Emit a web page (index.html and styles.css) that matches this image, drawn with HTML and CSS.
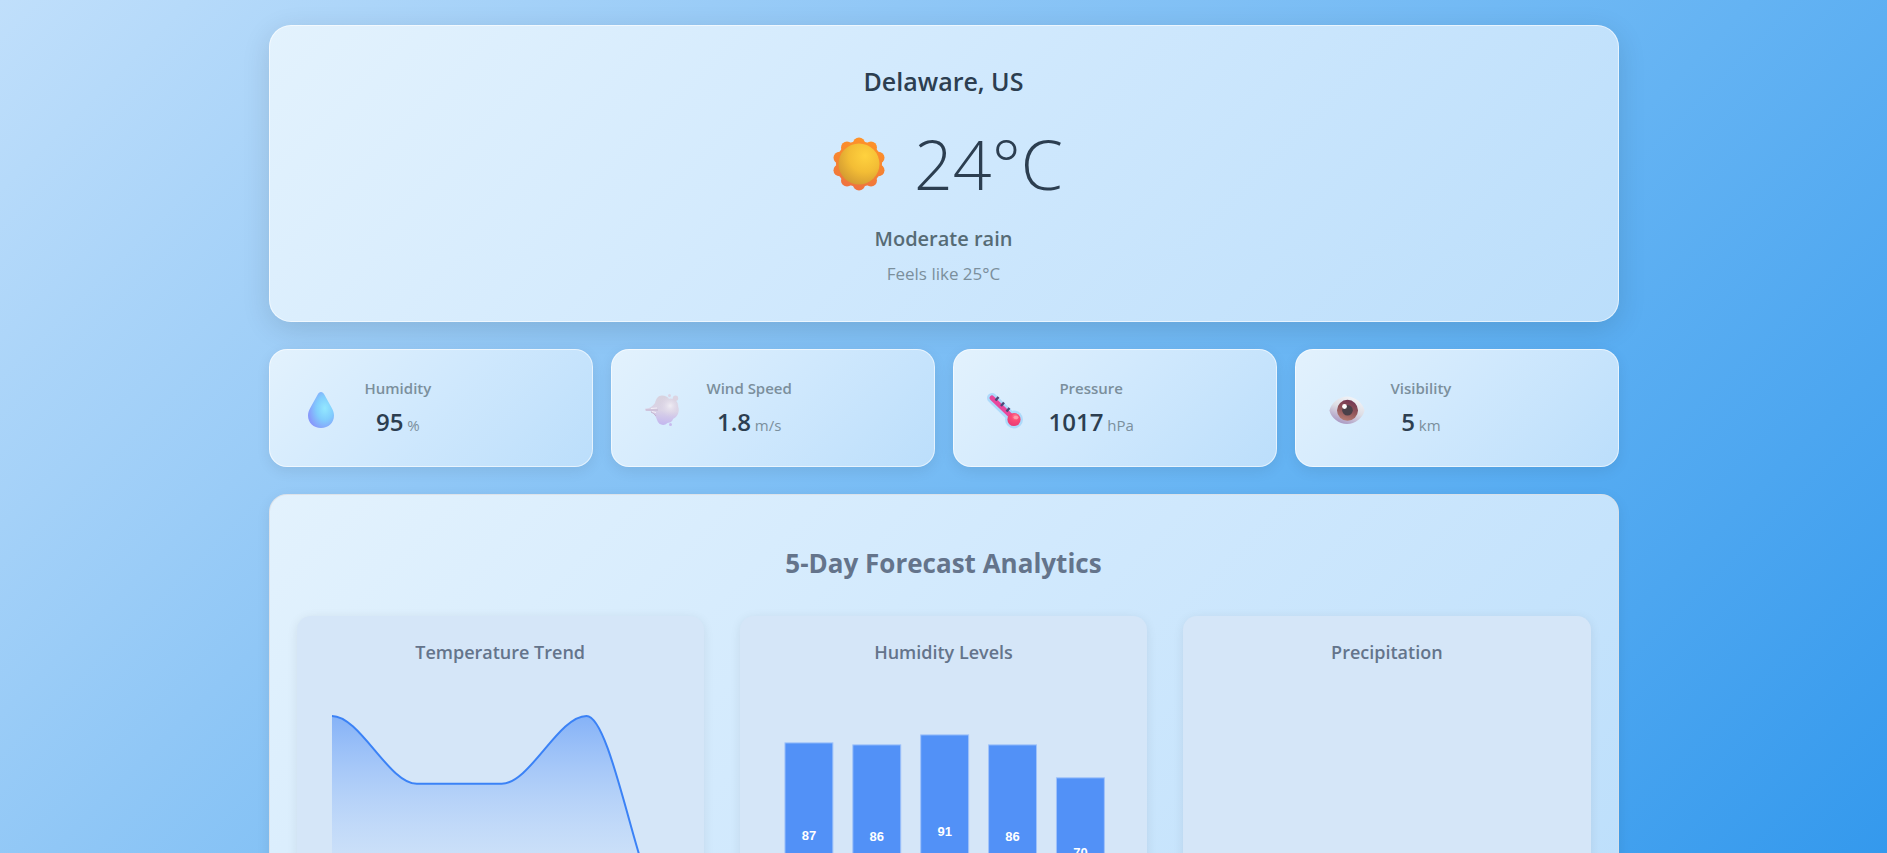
FILE: index.html
```html
<!DOCTYPE html>
<html lang="en">
<head>
<meta charset="utf-8">
<title>Weather Dashboard</title>
<meta name="viewport" content="width=device-width, initial-scale=1">
<link rel="stylesheet" href="styles.css">
</head>
<body>
<main class="dashboard">
  <section class="hero panel">
    <h1 class="hero-city">Delaware, US</h1>
    <div class="hero-now">
      <svg class="hero-icon" viewBox="0 0 70 70" aria-hidden="true">
        <defs>
          <radialGradient id="sunFace" cx="0.65" cy="0.3" r="0.8">
            <stop offset="0" stop-color="#ffd23e"/><stop offset="0.5" stop-color="#f3bd35"/><stop offset="1" stop-color="#cf9631"/>
          </radialGradient>
          <linearGradient id="sunRay" gradientUnits="userSpaceOnUse" x1="42" y1="8" x2="28" y2="62">
            <stop offset="0" stop-color="#ff9429"/><stop offset="0.5" stop-color="#f68431"/><stop offset="1" stop-color="#ee7040"/>
          </linearGradient>
        </defs>
        <g fill="url(#sunRay)">
          <circle cx="35" cy="35" r="23"/>
          <circle cx="35" cy="14.500" r="6"/>
          <circle cx="47" cy="18.400" r="6"/>
          <circle cx="54.500" cy="28.700" r="6"/>
          <circle cx="54.500" cy="41.300" r="6"/>
          <circle cx="47" cy="51.600" r="6"/>
          <circle cx="35" cy="55.500" r="6"/>
          <circle cx="23" cy="51.600" r="6"/>
          <circle cx="15.500" cy="41.300" r="6"/>
          <circle cx="15.500" cy="28.700" r="6"/>
          <circle cx="23" cy="18.400" r="6"/>
        </g>
        <circle cx="35" cy="35" r="20.500" fill="url(#sunFace)"/>
      </svg>
      <span class="hero-temp">24°C</span>
    </div>
    <p class="hero-condition">Moderate rain</p>
    <p class="hero-feels">Feels like 25°C</p>
  </section>

  <section class="stats">
    <article class="stat panel">
      <svg class="stat-icon" viewBox="0 -2 48 48" aria-hidden="true">
        <defs>
          <radialGradient id="dropFill" cx="0.65" cy="0.45" r="0.65">
            <stop offset="0" stop-color="#93e8ff"/><stop offset="0.5" stop-color="#81cdfd"/><stop offset="1" stop-color="#8799fb"/>
          </radialGradient>
        </defs>
        <path fill="url(#dropFill)" d="M24 6 C25.500 6 26.500 7 27.300 8.600 L34.500 21.500 C36.300 24.600 37 27 37 29.500 C37 37 31.500 42 24 42 C16.500 42 11 37 11 29.500 C11 27 11.700 24.600 13.500 21.500 L20.700 8.600 C21.500 7 22.500 6 24 6Z"/>
      </svg>
      <div class="stat-text">
        <h2 class="stat-label">Humidity</h2>
        <p class="stat-value">95<span class="stat-unit"> %</span></p>
      </div>
    </article>
    <article class="stat panel">
      <svg class="stat-icon" viewBox="0 -2 48 48" aria-hidden="true">
        <defs>
          <linearGradient id="puffFill" x1="0.5" y1="0" x2="0.4" y2="1">
            <stop offset="0" stop-color="#d8d2de"/><stop offset="0.5" stop-color="#dad3e6"/><stop offset="1" stop-color="#c2b5ef"/>
          </linearGradient>
          <radialGradient id="puffLight" cx="0.6" cy="0.4" r="0.5">
            <stop offset="0" stop-color="#f0edf4"/><stop offset="1" stop-color="#dcd4e7" stop-opacity="0"/>
          </radialGradient>
        </defs>
        <path fill="url(#puffFill)" d="M6 22.800 C11 22.500 13.500 20.500 16 17 C17 13 19 9.500 23 9.500 C26.500 9.500 28.500 11 30 13 C35 11.500 39.500 15.500 39 20.500 C41 26 38.500 31 34 33 C33 36.500 30 36.500 28.500 37 C25 40.500 19.500 39 18 34 C17 30 14 26 11 25 L6 24.500Z"/>
        <circle cx="29" cy="22" r="11" fill="url(#puffLight)"/>
        <path d="M7 24 L19 24 M12 26 Q15 27 17 30" stroke="#c4b2cd" stroke-width="1" fill="none"/>
        <path d="M12 22.500 L18 22 M13 25.500 L17 26.500" stroke="#f3eef7" stroke-width="1"/>
        <circle cx="36.500" cy="12.300" r="2.700" fill="#dcd4e2"/><circle cx="30.500" cy="9.500" r="1.500" fill="#dcd4e5"/><circle cx="31.500" cy="38.500" r="1.500" fill="#c7bbef"/>
      </svg>
      <div class="stat-text">
        <h2 class="stat-label">Wind Speed</h2>
        <p class="stat-value">1.8<span class="stat-unit"> m/s</span></p>
      </div>
    </article>
    <article class="stat panel">
      <svg class="stat-icon" viewBox="0 -2 48 48" aria-hidden="true">
        <defs>
          <radialGradient id="bulb" cx="0.6" cy="0.3" r="0.7">
            <stop offset="0" stop-color="#ff8c9c"/><stop offset="0.4" stop-color="#fb4c76"/><stop offset="1" stop-color="#e93c76"/>
          </radialGradient>
        </defs>
        <path d="M11 12 L33 33.500" stroke="#addafb" stroke-width="10" stroke-linecap="round"/>
        <circle cx="33" cy="33.500" r="9" fill="#addafb"/>
        <path d="M11 12 L31 31" stroke="#e8479c" stroke-width="5" stroke-linecap="round"/>
        <circle cx="33" cy="33.500" r="6.600" fill="url(#bulb)"/>
        <path d="M14.500 14.500 L17.500 11 M20 20 L23 16.500 M25.500 25.500 L28.500 22" stroke="#4d4a78" stroke-width="2.400"/>
        <ellipse cx="35" cy="31.500" rx="2.500" ry="1.800" fill="#ffa5ae" opacity="0.8"/>
      </svg>
      <div class="stat-text">
        <h2 class="stat-label">Pressure</h2>
        <p class="stat-value">1017<span class="stat-unit"> hPa</span></p>
      </div>
    </article>
    <article class="stat panel">
      <svg class="stat-icon" viewBox="0 -2 48 48" aria-hidden="true">
        <defs>
          <linearGradient id="eyeWhite" x1="0.8" y1="0" x2="0.3" y2="1">
            <stop offset="0" stop-color="#f5f7fa"/><stop offset="0.5" stop-color="#dddde4"/><stop offset="1" stop-color="#a794c0"/>
          </linearGradient>
          <linearGradient id="iris" x1="0.7" y1="0" x2="0.4" y2="1">
            <stop offset="0" stop-color="#713653"/><stop offset="0.5" stop-color="#8f5358"/><stop offset="1" stop-color="#b57c72"/>
          </linearGradient>
        </defs>
        <path fill="url(#eyeWhite)" d="M6.500 24.500 C8 17 16 10.500 24 10.500 C32 10.500 40 17 41.500 24.500 C40 32 32 38 24 38 C16 38 8 32 6.500 24.500Z"/>
        <circle cx="24.500" cy="24.300" r="10.500" fill="url(#iris)"/>
        <circle cx="24.500" cy="24.300" r="5.300" fill="#4a4149"/>
        <circle cx="21.500" cy="20.500" r="2.400" fill="#fff"/>
      </svg>
      <div class="stat-text">
        <h2 class="stat-label">Visibility</h2>
        <p class="stat-value">5<span class="stat-unit"> km</span></p>
      </div>
    </article>
  </section>

  <section class="analytics panel">
    <h2 class="analytics-title">5-Day Forecast Analytics</h2>
    <div class="charts">
      <article class="chart">
        <h3 class="chart-title">Temperature Trend</h3>
        <svg class="chart-plot" viewBox="0 0 372 260" role="img" aria-label="Temperature over five days">
          <defs>
            <linearGradient id="area" gradientUnits="userSpaceOnUse" x1="0" y1="36" x2="0" y2="242">
              <stop offset="0" stop-color="#3b82f6" stop-opacity="0.52"/><stop offset="0.8" stop-color="#bfd9fc" stop-opacity="0.2"/>
            </linearGradient>
          </defs>
          <path fill="url(#area)" d="M17 36 C45 36 74 104 102 104 H187 C215 104 244 36 272 36 C300 36 329 242 357 242 H17Z"/>
          <path class="trend-line" d="M17 36 C45 36 74 104 102 104 H187 C215 104 244 36 272 36 C300 36 329 242 357 242"/>
        </svg>
      </article>
      <article class="chart">
        <h3 class="chart-title">Humidity Levels</h3>
        <svg class="chart-plot" viewBox="0 0 372 260" role="img" aria-label="Humidity over five days">
          <g class="bars">
            <rect x="27" y="63" width="48" height="179"/>
            <rect x="95" y="65" width="48" height="177"/>
            <rect x="163" y="55" width="48" height="187"/>
            <rect x="231" y="65" width="48" height="177"/>
            <rect x="299" y="98" width="48" height="144"/>
          </g>
          <g class="bar-labels">
            <text x="51" y="160">87</text>
            <text x="119" y="161">86</text>
            <text x="187" y="156">91</text>
            <text x="255" y="161">86</text>
            <text x="323" y="177">70</text>
          </g>
        </svg>
      </article>
      <article class="chart">
        <h3 class="chart-title">Precipitation</h3>
        <svg class="chart-plot" viewBox="0 0 372 260" role="img" aria-label="No precipitation"></svg>
      </article>
    </div>
  </section>
</main>
</body>
</html>
```

FILE: styles.css
```css
* {
  box-sizing: border-box;
}

body {
  margin: 0;
  height: 100vh;
  overflow-x: hidden;
  overflow-y: auto;
  scrollbar-width: none;
  font-family: "Segoe UI", "Open Sans", "Noto Sans", sans-serif;
  color: #2c3e50;
  background: linear-gradient(135deg, #c0dffb 0%, #90c7f6 33%, #64b3f3 64%, #3499ed 100%) fixed;
}

h1, h2, h3, p {
  margin: 0;
}

.dashboard {
  display: flex;
  flex-direction: column;
  gap: 27px;
  max-width: 1350px;
  margin: 0 auto;
  padding: 25px 0 27px;
}

.panel {
  border: 1px solid rgba(255, 255, 255, 0.6);
  border-radius: 18px;
  background: linear-gradient(135deg, #e3f2fd 0%, #cfe8fd 50%, #bbdefb 100%) border-box;
  box-shadow: 0 4px 14px rgba(0, 0, 0, 0.08);
}

.hero {
  display: flex;
  flex-direction: column;
  align-items: center;
  padding: 36px 36px 35px;
  border-radius: 22px;
  box-shadow: 0 7px 29px rgba(0, 0, 0, 0.12);
}

.hero-city {
  font-size: 25px;
  font-weight: 600;
  line-height: 38px;
}

.hero-now {
  display: flex;
  align-items: center;
  gap: 20px;
  margin: 18px 0 14px;
}

.hero-icon {
  width: 70px;
  height: 70px;
}

.hero-temp {
  font-size: 68px;
  font-weight: 300;
  line-height: 92px;
}

.hero-condition {
  font-size: 20px;
  font-weight: 600;
  line-height: 30px;
  color: #566b75;
}

.hero-feels {
  margin-top: 8px;
  font-size: 17px;
  line-height: 24px;
  color: #7b8f9c;
}

.stats {
  display: grid;
  grid-template-columns: repeat(4, 1fr);
  gap: 18px;
}

.stat {
  display: flex;
  align-items: center;
  gap: 20px;
  padding: 26px 27px;
}

.stat-icon {
  width: 48px;
  height: 48px;
}

.stat-text {
  text-align: center;
}

.stat-label {
  font-size: 15px;
  font-weight: 600;
  line-height: 24px;
  color: #7b8f9c;
}

.stat-value {
  margin-top: 4px;
  font-size: 24px;
  font-weight: 600;
  line-height: 36px;
}

.stat-unit {
  font-size: 15px;
  font-weight: 400;
  line-height: 1;
  color: #7b8f9c;
}

.analytics {
  padding: 50px 27px 27px;
  border-color: rgba(220, 222, 228, 0.8);
}

.analytics-title {
  font-size: 26px;
  font-weight: 700;
  line-height: 36px;
  text-align: center;
  color: #64748b;
}

.charts {
  display: grid;
  grid-template-columns: repeat(3, 1fr);
  gap: 36px;
  margin-top: 35px;
}

.chart {
  padding: 22px 18px;
  border-radius: 14px;
  background: #d5e6f8;
  box-shadow: 0 2px 11px rgba(0, 0, 0, 0.08);
}

.chart-title {
  font-size: 18px;
  font-weight: 600;
  line-height: 28px;
  text-align: center;
  color: #64748b;
}

.chart-plot {
  display: block;
  width: 100%;
  margin-top: 14px;
}

.trend-line {
  fill: none;
  stroke: #3b82f6;
  stroke-width: 2;
}

.bars rect {
  fill: #5291f7;
  stroke: #9fc2fa;
  stroke-width: 1;
}

.bar-labels text {
  font-family: "Liberation Sans", Arial, sans-serif;
  font-size: 13px;
  font-weight: 700;
  text-anchor: middle;
  fill: #fff;
}
```
